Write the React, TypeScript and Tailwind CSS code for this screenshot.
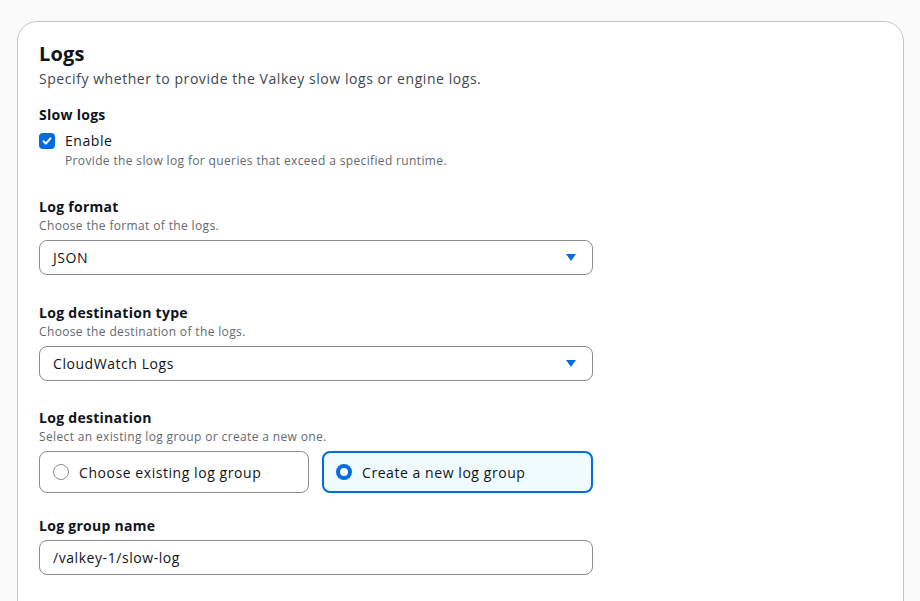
import React from "react";

function Caret() {
  return (
    <svg width="12" height="9" viewBox="0 0 12 9" className="shrink-0">
      <path d="M1 1h10L6 8z" fill="#006ce0" />
    </svg>
  );
}

function Field({ label, desc, className, children }: { label: string; desc?: string; className?: string; children: React.ReactNode }) {
  return (
    <div className={"flex flex-col " + (className ?? "")}>
      <span className="text-[14px] leading-[22px] font-bold tracking-[0.02em] text-[#0f141a]">{label}</span>
      {desc && <span className="text-[12px] leading-[16px] tracking-[0.03em] text-[#656871]">{desc}</span>}
      <div className={desc ? "mt-[6px]" : "mt-[3px]"}>{children}</div>
    </div>
  );
}

function Select({ value }: { value: string }) {
  return (
    <div className="w-[554px] h-[35px] flex items-center justify-between pl-[13px] pr-[15px] border border-[#8c8c94] rounded-[8px] bg-white">
      <span className="text-[14px] text-[#0f141a]">{value}</span>
      <Caret />
    </div>
  );
}

function App() {
  return (
    <div className="h-[601px] overflow-hidden bg-[#fafafa] pt-[21px] px-[17px] font-['Open_Sans',sans-serif] tracking-[0.035em]">
      <div className="w-[887px] h-[620px] bg-white border border-[#c6c6cd] rounded-[20px] pl-[21px] pt-[18px]">
        <h2 className="text-[20px] leading-[28px] font-bold tracking-[0.01em] text-[#0f141a]">Logs</h2>
        <p className="text-[14px] leading-[20px] text-[#414750] mt-[1px]">
          Specify whether to provide the Valkey slow logs or engine logs.
        </p>

        <div className="mt-[15px] flex flex-col">
          <span className="text-[14px] leading-[22px] font-bold tracking-[0.02em] text-[#0f141a]">Slow logs</span>
          <div className="flex mt-[4px]">
            <div className="w-[16px] h-[16px] mt-[3px] rounded-[4px] bg-[#006ce0] flex items-center justify-center">
              <svg width="12" height="12" viewBox="0 0 12 12">
                <path d="M2.5 6.2l2.4 2.4 4.6-5.2" stroke="white" strokeWidth="2" fill="none" strokeLinecap="round" strokeLinejoin="round" />
              </svg>
            </div>
            <div className="ml-[10px] flex flex-col">
              <span className="text-[14px] leading-[22px] text-[#0f141a]">Enable</span>
              <span className="text-[12px] leading-[16px] mt-[1px] tracking-[0.03em] text-[#656871]">
                Provide the slow log for queries that exceed a specified runtime.
              </span>
            </div>
          </div>
        </div>

        <div className="mt-[27px] flex flex-col">
          <Field label="Log format" desc="Choose the format of the logs.">
            <Select value="JSON" />
          </Field>
          <Field label="Log destination type" desc="Choose the destination of the logs." className="mt-[27px]">
            <Select value="CloudWatch Logs" />
          </Field>
          <Field label="Log destination" desc="Select an existing log group or create a new one." className="mt-[26px]">
            <div className="flex gap-[13px] w-[554px]">
              <div className="flex-1 h-[42px] flex items-center pl-[13px] border border-[#8c8c94] rounded-[8px] bg-white">
                <span className="w-[16px] h-[16px] rounded-full border border-[#8c8c94] bg-white" />
                <span className="ml-[10px] text-[14px] text-[#0f141a]">Choose existing log group</span>
              </div>
              <div className="flex-1 h-[42px] flex items-center pl-[12px] border-2 border-[#006ce0] rounded-[8px] bg-[#f0fbff]">
                <span className="w-[16px] h-[16px] rounded-full border-[4px] border-[#006ce0] bg-white" />
                <span className="ml-[10px] text-[14px] text-[#0f141a]">Create a new log group</span>
              </div>
            </div>
          </Field>
          <Field label="Log group name" className="mt-[22px]">
            <div className="w-[554px] h-[35px] flex items-center pl-[13px] border border-[#8c8c94] rounded-[8px] bg-white">
              <span className="text-[14px] text-[#0f141a]">/valkey-1/slow-log</span>
            </div>
          </Field>
        </div>
      </div>
    </div>
  );
}

export default App;
